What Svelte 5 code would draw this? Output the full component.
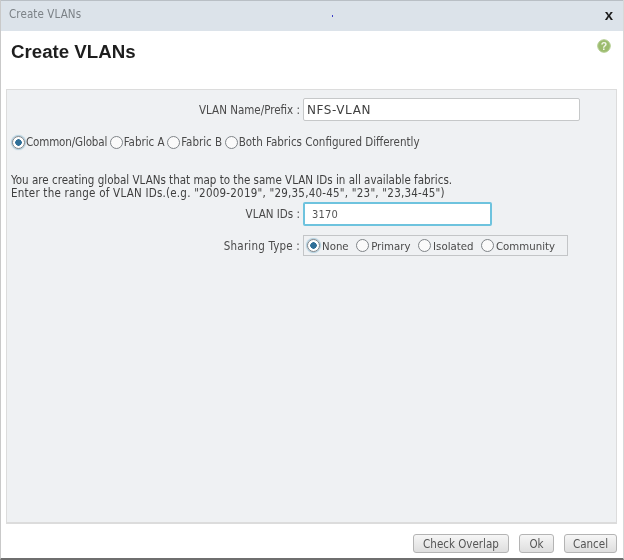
<script>
  const fabrics = [
    { label: 'Common/Global', on: true },
    { label: 'Fabric A' },
    { label: 'Fabric B' },
    { label: 'Both Fabrics Configured Differently' }
  ];
  const sharing = [
    { label: 'None', on: true },
    { label: 'Primary' },
    { label: 'Isolated' },
    { label: 'Community' }
  ];
</script>

<div class="window">
  <header class="titlebar">
    <span class="title-small">Create VLANs</span>
    <span class="dot"></span>
    <span class="close">x</span>
  </header>

  <div class="heading">
    <h1>Create VLANs</h1>
    <svg class="help" width="14" height="14" viewBox="0 0 14 14">
      <circle cx="7" cy="7" r="6.3" fill="#9cbc6e" stroke="#b4cd92" stroke-width="1" />
      <text x="7" y="10.6" text-anchor="middle" class="help-mark">?</text>
    </svg>
  </div>

  <main class="panel">
    <div class="row name-row">
      <span class="label">VLAN Name/Prefix :</span>
      <div class="input name-input">NFS-VLAN</div>
    </div>

    <div class="fabrics">
      {#each fabrics as f}
        <span class="opt">
          <span class="radio" class:on={f.on}></span>{f.label}
        </span>
      {/each}
    </div>

    <p class="hint">
      You are creating global VLANs that map to the same VLAN IDs in all available fabrics.<br />
      <span class="hint-range">Enter the range of VLAN IDs.(e.g. "2009-2019", "29,35,40-45", "23", "23,34-45")</span>
    </p>

    <div class="row ids-row">
      <span class="label">VLAN IDs :</span>
      <div class="input ids-input">3170</div>
    </div>

    <div class="row sharing-row">
      <span class="label">Sharing Type :</span>
      <div class="sharing">
        {#each sharing as s}
          <span class="opt">
            <span class="radio" class:on={s.on}></span>{s.label}
          </span>
        {/each}
      </div>
    </div>
  </main>

  <footer class="actions">
    <button class="wide">Check Overlap</button>
    <button class="ok">Ok</button>
    <button class="cancel">Cancel</button>
  </footer>
</div>

<style>
  :global(body) {
    margin: 0;
    background: #fff;
  }
  .window {
    width: 624px;
    height: 560px;
    box-sizing: border-box;
    position: relative;
    display: flex;
    flex-direction: column;
    background: #fff;
    border-left: 1px solid #c9c9c9;
    border-right: 1px solid #d8d8d8;
    border-bottom: 2px solid #6f6f6f;
    font-family: "DejaVu Sans Condensed", "DejaVu Sans", sans-serif;
    font-stretch: condensed;
    font-size: 11.5px;
    color: #4a4a4a;
    filter: blur(0.45px);
  }
  .titlebar {
    height: 31px;
    flex: none;
    display: flex;
    align-items: center;
    padding: 0 10px 4px 8px;
    box-sizing: border-box;
    background: #dce3ea;
    border-top: 1px solid #b9bfc5;
  }
  .title-small {
    color: #7c8287;
    font-size: 11.5px;
    letter-spacing: 0.1px;
  }
  .dot {
    width: 1px;
    height: 2px;
    background: #3b3bc8;
    margin-left: 251px;
    margin-top: 4px;
  }
  .close {
    margin-left: auto;
    font-family: "Liberation Sans", sans-serif;
    font-stretch: normal;
    font-weight: 700;
    font-size: 15px;
    color: #1b1b1b;
  }
  .heading {
    height: 58px;
    flex: none;
    display: flex;
    justify-content: space-between;
    align-items: flex-start;
    padding: 9px 12px 0 10px;
    box-sizing: border-box;
  }
  h1 {
    margin: 0;
    font-family: "Liberation Sans", sans-serif;
    font-stretch: normal;
    font-size: 18.7px;
    font-weight: 700;
    line-height: 24px;
    color: #1e1e1e;
  }
  .help {
    margin-top: -1px;
  }
  .help-mark {
    font-family: "Liberation Sans", sans-serif;
    font-size: 10.5px;
    font-weight: 700;
    fill: #f2f6ea;
  }
  .panel {
    margin: 0 6px 0 5px;
    height: 435px;
    flex: none;
    box-sizing: border-box;
    background: #eff1f3;
    border: 1px solid #dcdcdc;
    border-bottom: 2px solid #dcdcdc;
    padding-top: 8px;
  }
  .row {
    display: flex;
    align-items: center;
  }
  .label {
    width: 293px;
    flex: none;
    text-align: right;
    margin-right: 3px;
  }
  .input {
    box-sizing: border-box;
    background: #fff;
    border-radius: 2px;
    display: flex;
    align-items: center;
  }
  .name-input {
    width: 277px;
    height: 23px;
    border: 1px solid #c6c8c9;
    padding-left: 3px;
    font-family: "DejaVu Sans", sans-serif;
    font-stretch: normal;
    font-size: 12px;
    letter-spacing: 0.6px;
    color: #3f3f3f;
  }
  .ids-input {
    width: 189px;
    height: 24px;
    border: 2px solid #6ec3de;
    padding: 1px 0 0 7px;
    font-size: 11px;
    letter-spacing: 0.2px;
    color: #555;
  }
  .fabrics {
    display: flex;
    height: 16px;
    margin: 13px 0 0 5px;
    align-items: center;
    gap: 2.5px;
  }
  .fabrics .opt:first-child {
    letter-spacing: -0.15px;
  }
  .opt {
    display: inline-flex;
    align-items: center;
    white-space: nowrap;
  }
  .radio {
    width: 11px;
    height: 11px;
    border-radius: 50%;
    border: 1px solid #7f8488;
    background: #fafafa;
    margin-right: 1px;
    flex: none;
  }
  .radio.on {
    background: radial-gradient(circle, #2f6f98 0 3px, #fff 3.5px);
    box-shadow: 0 0 1px 1px #a9cbdc;
  }
  .hint {
    margin: 24px 0 0 4px;
    line-height: 13px;
    color: #3f3f3f;
  }
  .hint-range {
    letter-spacing: 0.22px;
  }
  .ids-row {
    margin-top: 2px;
  }
  .sharing-row {
    margin-top: 9px;
  }
  .sharing-row .label {
    letter-spacing: 0.2px;
  }
  .sharing {
    width: 265px;
    height: 21px;
    box-sizing: border-box;
    border: 1px solid #c3c5c7;
    display: flex;
    align-items: center;
    padding-left: 3px;
    gap: 7.5px;
    font-size: 11.35px;
  }
  .sharing .radio {
    margin-right: 2px;
  }
  .actions {
    flex: 1;
    display: flex;
    justify-content: flex-end;
    align-items: flex-start;
    gap: 10px;
    padding: 10px 6px 0 0;
  }
  button {
    height: 19px;
    padding: 0;
    box-sizing: border-box;
    font: inherit;
    font-size: 11.5px;
    color: #555;
    border: 1px solid #b4b4b4;
    border-radius: 3px;
    background: linear-gradient(#f6f6f6, #dedede);
  }
  .wide {
    width: 96px;
  }
  .ok {
    width: 35px;
  }
  .cancel {
    width: 53px;
  }
</style>
